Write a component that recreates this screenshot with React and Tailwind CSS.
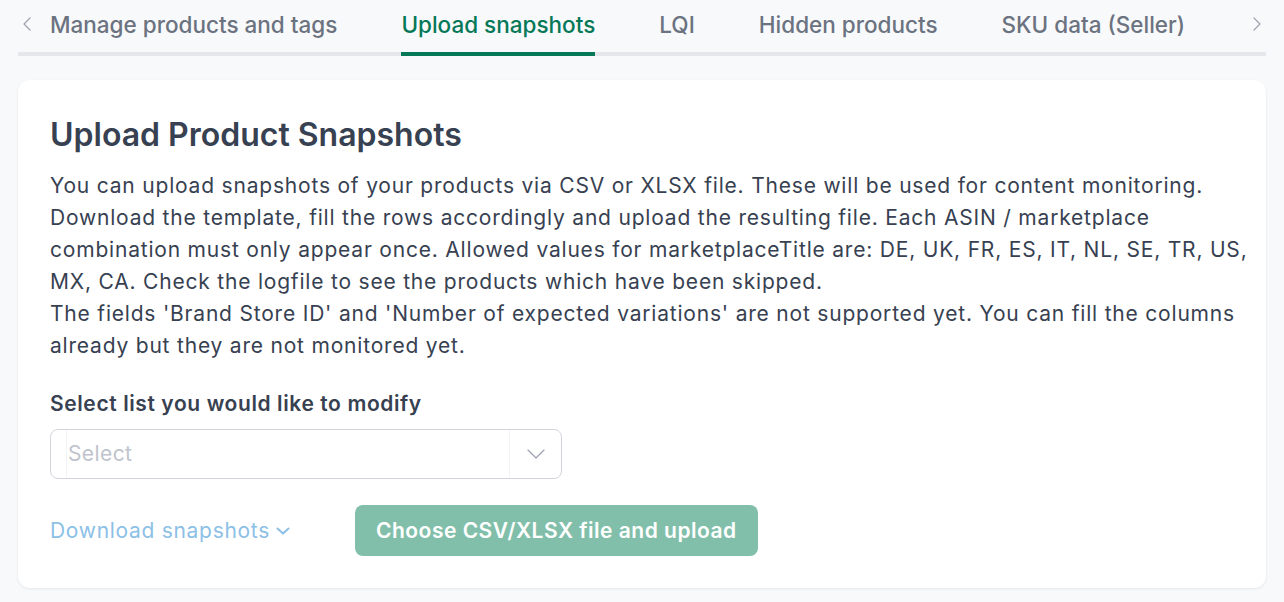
import React, { useState } from 'react';

const tabs = ['Manage products and tags', 'Upload snapshots', 'LQI', 'Hidden products', 'SKU data (Seller)'];

const introLines = [
  'You can upload snapshots of your products via CSV or XLSX file. These will be used for content monitoring.',
  'Download the template, fill the rows accordingly and upload the resulting file. Each ASIN / marketplace',
  'combination must only appear once. Allowed values for marketplaceTitle are: DE, UK, FR, ES, IT, NL, SE, TR, US,',
  'MX, CA. Check the logfile to see the products which have been skipped.',
];

const noteLines = [
  "The fields 'Brand Store ID' and 'Number of expected variations' are not supported yet. You can fill the columns",
  'already but they are not monitored yet.',
];

function Chevron({ dir, className }) {
  // thin chevron used in the tab scroller
  const d = {
    left: 'M7 1 L1 7 L7 13',
    right: 'M1 1 L7 7 L1 13',
  }[dir];
  return (
    <svg width="8" height="14" viewBox="0 0 8 14" fill="none" className={className}>
      <path d={d} stroke="currentColor" strokeWidth="1.2" strokeLinecap="round" strokeLinejoin="round" />
    </svg>
  );
}

function App() {
  const [active, setActive] = useState(1);

  return (
    <div className="min-h-screen bg-[#f8f9fb] px-[18px] font-['Inter',sans-serif]">
      {/* tab scroller */}
      <div className="relative flex h-[56px] border-b-4 border-[#e5e7eb]">
        <button className="absolute left-[5px] top-[17px] text-[#9ca3af]">
          <Chevron dir="left" />
        </button>
        <div className="flex gap-[64px] pl-[32px]">
          {tabs.map((t, i) => (
            <button
              key={t}
              onClick={() => setActive(i)}
              className={`-mb-1 h-[56px] whitespace-nowrap border-b-4 pb-[2px] text-[22.5px] font-medium leading-[28px] ${
                active === i ? 'border-[#047857] text-[#047857]' : 'border-transparent text-[#6b7280]'
              }`}
            >
              {t}
            </button>
          ))}
        </div>
        <button className="absolute right-[5px] top-[17px] text-[#9ca3af]">
          <Chevron dir="right" />
        </button>
      </div>

      {/* card */}
      <div className="mt-6 rounded-xl bg-white px-8 pb-8 pt-[37px] shadow-[0_1px_3px_rgba(0,0,0,0.08)]">
        <h1 className="text-[32px] font-semibold leading-[36px] text-[#374151]">Upload Product Snapshots</h1>
        <div className="mt-[17px] text-[21px] leading-[32px] tracking-[0.8px] text-[#374151]">
          <p>
            {introLines.map((l) => (
              <span key={l} className="block whitespace-nowrap">
                {l}
              </span>
            ))}
          </p>
          <p>
            {noteLines.map((l) => (
              <span key={l} className="block whitespace-nowrap">
                {l}
              </span>
            ))}
          </p>
        </div>

        <label className="mt-[28px] block text-[21px] font-semibold leading-[28px] tracking-[0.6px] text-[#374151]">
          Select list you would like to modify
        </label>
        <div className="mt-[11px] flex h-[50px] w-[512px] items-stretch rounded-lg border border-[#d1d5db] bg-white">
          <div className="ml-[15px] flex flex-1 items-center border-l border-[#f3f4f6] pl-[1px] text-[21px] tracking-[0.4px] text-[#c0c4cc]">
            Select
          </div>
          <div className="flex w-[52px] items-center justify-center border-l border-[#f3f4f6] text-[#9ca3af]">
            <svg width="18" height="10" viewBox="0 0 18 10" fill="none">
              <path d="M1 1 L9 9 L17 1" stroke="currentColor" strokeWidth="1.2" strokeLinecap="round" strokeLinejoin="round" />
            </svg>
          </div>
        </div>

        <div className="mt-[26px] flex items-center gap-[65px]">
          <button className="flex items-center gap-[6px] text-[21px] tracking-[0.7px] text-[#8cc0e6]">
            Download snapshots
            <svg width="14" height="8" viewBox="0 0 14 8" fill="none">
              <path d="M1.5 1.5 L7 6.5 L12.5 1.5" stroke="currentColor" strokeWidth="2" strokeLinecap="round" strokeLinejoin="round" />
            </svg>
          </button>
          <button className="h-[51px] rounded-lg bg-[#82bfab] px-[21px] text-[21px] font-semibold tracking-[0.5px] text-white">
            Choose CSV/XLSX file and upload
          </button>
        </div>
      </div>
    </div>
  );
}

export default App;
